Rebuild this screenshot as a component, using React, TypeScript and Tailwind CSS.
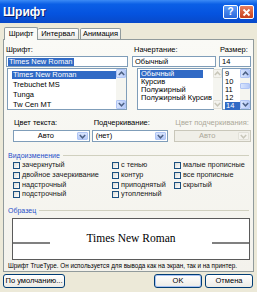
const Arrow = ({ up = false, color = "#4d6185" }: { up?: boolean; color?: string }) => (
  <svg width="7" height="5" viewBox="0 0 7 5" className={up ? "rotate-180" : ""}>
    <path d="M0.8 1 L3.5 3.8 L6.2 1" fill="none" stroke={color} strokeWidth="1.5" />
  </svg>
);

const DropBtn = ({ disabled = false }: { disabled?: boolean }) => (
  <div
    className={
      disabled
        ? "w-[11px] h-full flex items-center justify-center bg-[#f4f3ee] border border-[#e2e1d9] rounded-[1px]"
        : "w-[11px] h-full flex items-center justify-center bg-[linear-gradient(180deg,#d8e4fd,#b7cbf8)] border border-[#b0c5f5] rounded-[1px]"
    }
  >
    <Arrow color={disabled ? "#c9c7ba" : "#4d6185"} />
  </div>
);

const ScrollBar = ({ disabled = false, thumb = false }: { disabled?: boolean; thumb?: boolean }) => {
  const btn = disabled
    ? "h-[9px] flex items-center justify-center bg-[#f4f3ee] border border-[#e2e1d9] rounded-[1px]"
    : "h-[9px] flex items-center justify-center bg-[linear-gradient(90deg,#d8e4fd,#b7cbf8)] border border-[#b0c5f5] rounded-[1px]";
  const c = disabled ? "#c9c7ba" : "#4d6185";
  return (
    <div className="w-[10px] h-full flex flex-col bg-[#f5f5f0]">
      <div className={btn}>
        <Arrow up color={c} />
      </div>
      <div className="flex-1 flex flex-col">
        {thumb && <div className="mt-[5px] h-[6px] bg-[linear-gradient(90deg,#d8e4fd,#b7cbf8)] border border-[#b0c5f5] rounded-[1px]" />}
      </div>
      <div className={btn}>
        <Arrow color={c} />
      </div>
    </div>
  );
};

const Check = ({ label }: { label: string }) => (
  <div className="h-[9.7px] flex items-center">
    <div className="w-[7px] h-[7px] border border-[#1c5180] bg-[linear-gradient(135deg,#dcdcd6,#ffffff)]" />
    <span className="ml-[2px] text-[7.3px] text-[#1a1a1a]">{label}</span>
  </div>
);

const GroupLabel = ({ text }: { text: string }) => (
  <div className="h-[9px] flex items-center">
    <span className="text-[7px] text-[#1f4fc9] leading-none">{text}</span>
    <div className="ml-[3px] flex-1 h-px bg-[#d0d0bf]" />
  </div>
);

export default function App() {
  return (
    <div className="w-[257px] h-[292px] bg-[#ece9d8] flex flex-col overflow-hidden font-['Liberation_Sans',Arial,sans-serif] text-[7.5px] text-black">
      {/* title bar */}
      <div className="h-[23px] flex items-center justify-between px-[3px] bg-[linear-gradient(180deg,#3c8bf5_0%,#0b5fe6_18%,#0553df_60%,#0849c9_100%)]">
        <span className="text-white font-bold text-[12px] [text-shadow:1px_1px_0_#0a1f6e]">Шрифт</span>
        <div className="flex gap-[1px] mt-[1px]">
          <div className="w-[15px] h-[14px] rounded-[2px] border border-white bg-[linear-gradient(180deg,#5d9bf7,#2a67dc)] flex items-center justify-center text-white font-bold text-[10px] leading-none">
            ?
          </div>
          <div className="w-[15px] h-[14px] rounded-[2px] border border-white bg-[linear-gradient(180deg,#e9805f,#c8401c)] flex items-center justify-center">
            <svg width="9" height="9" viewBox="0 0 9 9">
              <path d="M1.5 1.5 L7.5 7.5 M7.5 1.5 L1.5 7.5" stroke="#fff" strokeWidth="1.8" />
            </svg>
          </div>
        </div>
      </div>

      <div className="flex-1 flex flex-col px-[3px]">
        {/* tabs */}
        <div className="h-[15px] mt-[1px] flex items-end pl-[1px] relative z-10">
          <div className="h-[13px] w-[34px] border border-b-0 border-[#919b9c] bg-[#fafaf6] rounded-t-[2px] flex items-center justify-center -mb-px pb-px">
            Шрифт
          </div>
          <div className="h-[11px] w-[41px] border border-l-0 border-b-0 border-[#919b9c] bg-[linear-gradient(180deg,#ffffff,#ecebe6)] rounded-t-[2px] flex items-center justify-center">
            Интервал
          </div>
          <div className="h-[11px] w-[41px] ml-[1px] border border-b-0 border-[#919b9c] bg-[linear-gradient(180deg,#ffffff,#ecebe6)] rounded-t-[2px] flex items-center justify-center">
            Анимация
          </div>
        </div>

        {/* tab panel */}
        <div className="h-[233px] w-[251px] border border-[#919b9c] bg-[linear-gradient(180deg,#fafaf6,#f3f2ec)] flex flex-col pt-[5px] px-[2px]">
          {/* font / style / size */}
          <div className="flex">
            <div className="w-[122px]">
              <div className="h-[9px] leading-[9px]">Шрифт:</div>
              <div className="mt-[2px] h-[11px] border border-[#7f9db9] bg-white flex items-center px-[1px]">
                <span className="bg-[#316ac5] text-white px-[1px] leading-[8px]">Times New Roman</span>
              </div>
              <div className="mt-px ml-px h-[42px] w-[120px] border border-[#7f9db9] bg-white flex">
                <div className="flex-1 pl-[4px] pt-[1px]">
                  <div className="h-[10px] flex items-center">
                    <span className="bg-[#316ac5] text-white w-full h-[8px] leading-[8px] px-[1px]">Times New Roman</span>
                  </div>
                  <div className="h-[10px] leading-[10px] px-[1px]">Trebuchet MS</div>
                  <div className="h-[9.5px] leading-[9.5px] px-[1px]">Tunga</div>
                  <div className="h-[9.5px] leading-[9.5px] px-[1px]">Tw Cen MT</div>
                </div>
                <ScrollBar />
              </div>
            </div>

            <div className="w-[84px] ml-[4px]">
              <div className="h-[9px] leading-[9px] pl-[2px]">Начертание:</div>
              <div className="mt-[2px] h-[11px] border border-[#7f9db9] bg-white flex items-center px-[2px]">Обычный</div>
              <div className="mt-px ml-[5px] h-[42px] w-[77px] border border-[#7f9db9] bg-white flex">
                <div className="flex-1 pl-[2px] pt-[1px]">
                  <div className="h-[8px] flex items-center">
                    <span className="bg-[#316ac5] text-white w-[63px] h-[8px] leading-[8px] px-[1px]">Обычный</span>
                  </div>
                  <div className="h-[8px] leading-[8px] px-[1px]">Курсив</div>
                  <div className="h-[8px] leading-[8px] px-[1px]">Полужирный</div>
                  <div className="h-[8px] leading-[8px] px-[1px] whitespace-nowrap">Полужирный Курсив</div>
                </div>
                <ScrollBar disabled />
              </div>
            </div>

            <div className="w-[32px] ml-[3px]">
              <div className="h-[9px] leading-[9px] pl-[1px]">Размер:</div>
              <div className="mt-[2px] h-[11px] border border-[#7f9db9] bg-white flex items-center px-[2px]">14</div>
              <div className="mt-px ml-[3px] h-[42px] w-[29px] border border-[#7f9db9] bg-white flex">
                <div className="flex-1 pl-[2px] pt-[1px]">
                  <div className="h-[8px] leading-[8px]">9</div>
                  <div className="h-[8px] leading-[8px]">10</div>
                  <div className="h-[8px] leading-[8px]">11</div>
                  <div className="h-[8px] leading-[8px]">12</div>
                  <div className="h-[8px] flex items-center">
                    <span className="bg-[#316ac5] text-white w-full h-[8px] leading-[8px] px-[1px]">14</span>
                  </div>
                </div>
                <ScrollBar thumb />
              </div>
            </div>
          </div>

          {/* colour / underline */}
          <div className="flex mt-[8px] pl-[7px]">
            <div className="w-[77px]">
              <div className="h-[9px] leading-[9px] pl-px">Цвет текста:</div>
              <div className="mt-[3px] h-[12px] border border-[#7f9db9] bg-white flex p-px">
                <div className="flex-1 flex items-center justify-center">Авто</div>
                <DropBtn />
              </div>
            </div>
            <div className="w-[77px] ml-[2px]">
              <div className="h-[9px] leading-[9px] pl-[2px]">Подчеркивание:</div>
              <div className="mt-[3px] h-[12px] border border-[#7f9db9] bg-white flex p-px">
                <div className="flex-1 flex items-center pl-[2px]">(нет)</div>
                <DropBtn />
              </div>
            </div>
            <div className="w-[77px] ml-[6px]">
              <div className="h-[9px] leading-[9px] pl-px text-[#aca899]">Цвет подчеркивания:</div>
              <div className="mt-[3px] h-[12px] border border-[#c9c7ba] bg-[#f0efe8] flex p-px">
                <div className="flex-1 flex items-center justify-center text-[#aca899]">Авто</div>
                <DropBtn disabled />
              </div>
            </div>
          </div>

          {/* effects */}
          <div className="mt-[9px] pl-[2px] pr-[2px]">
            <GroupLabel text="Видоизменение" />
          </div>
          <div className="flex pl-[7px] mt-px">
            <div className="w-[99px]">
              <Check label="зачеркнутый" />
              <Check label="двойное зачеркивание" />
              <Check label="надстрочный" />
              <Check label="подстрочный" />
            </div>
            <div className="w-[62px]">
              <Check label="с тенью" />
              <Check label="контур" />
              <Check label="приподнятый" />
              <Check label="утопленный" />
            </div>
            <div>
              <Check label="малые прописные" />
              <Check label="все прописные" />
              <Check label="скрытый" />
            </div>
          </div>

          {/* sample */}
          <div className="mt-[6px] pl-[2px] pr-[2px]">
            <GroupLabel text="Образец" />
          </div>
          <div className="mt-[3px] ml-[6px] w-[238px] h-[42px] border border-[#5a5a5a] bg-white flex items-center">
            <div className="w-[37px] h-[2px] bg-[#808080] mt-[8px]" />
            <div className="flex-1 text-center font-['Liberation_Serif','Times_New_Roman',serif] text-[11.5px] leading-none">
              Times New Roman
            </div>
            <div className="w-[37px] h-[2px] bg-[#808080] mt-[8px]" />
          </div>
          <div className="mt-px pl-[2px] h-[9px] leading-[9px] text-[6.3px] whitespace-nowrap">
            Шрифт TrueType. Он используется для вывода как на экран, так и на принтер.
          </div>
        </div>

        {/* buttons */}
        <div className="flex mt-[2px]">
          <div className="w-[62px] h-[14px] rounded-[3px] border border-[#003c74] bg-[linear-gradient(180deg,#ffffff,#ecebe6)] flex items-center justify-center">
            По умолчанию...
          </div>
          <div className="ml-auto w-[48px] h-[14px] rounded-[3px] border border-[#003c74] bg-[linear-gradient(180deg,#ffffff,#ecebe6)] shadow-[inset_0_0_0_1px_#a9c3f2] flex items-center justify-center">
            OK
          </div>
          <div className="ml-[3px] mr-[1px] w-[48px] h-[14px] rounded-[3px] border border-[#003c74] bg-[linear-gradient(180deg,#ffffff,#ecebe6)] flex items-center justify-center">
            Отмена
          </div>
        </div>
      </div>
    </div>
  );
}
